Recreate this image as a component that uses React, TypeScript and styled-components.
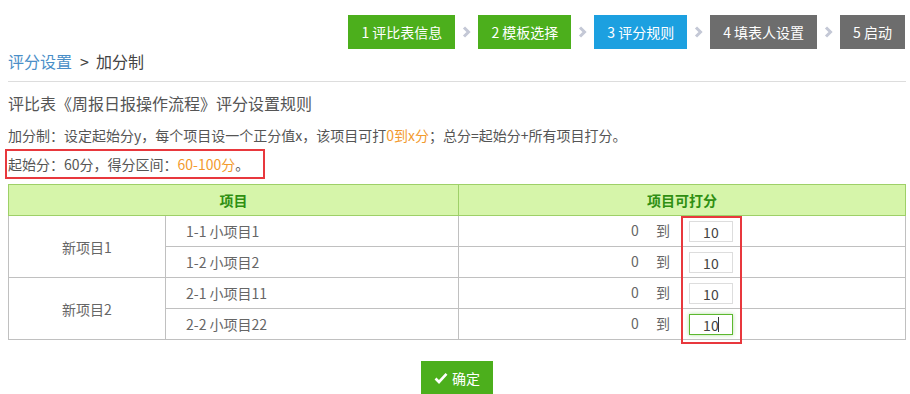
import React from "react";
import styled, { createGlobalStyle } from "styled-components";

const GlobalStyle = createGlobalStyle`
  body {
    margin: 0;
    background: #fff;
    font-family: "Microsoft YaHei", "Noto Sans CJK SC", "Noto Sans", sans-serif;
    color: #555;
    text-spacing-trim: space-all;
  }
`;

const Page = styled.div`
  padding: 15px 4px 0 8px;
`;

const Steps = styled.div`
  display: flex;
  justify-content: flex-end;
  align-items: center;
  padding-right: 1px;
`;

const stepColors: Record<string, string> = {
  done: "#4caf1c",
  active: "#1ca0e0",
  todo: "#6d6d6d",
};

const Step = styled.div<{ $status: string }>`
  height: 34px;
  padding: 0 13px;
  display: flex;
  align-items: center;
  background: ${(p) => stepColors[p.$status]};
  color: #fff;
  font-size: 14px;
  white-space: nowrap;
`;

const Chevron = styled.svg`
  width: 23px;
  height: 12px;
`;

const Breadcrumb = styled.div`
  font-size: 16px;
  line-height: 24px;
  color: #444;
`;

const CrumbLink = styled.a`
  color: #4a8fc8;
  text-decoration: none;
`;

const CrumbSep = styled.span`
  margin: 0 7px 0 8px;
`;

const Divider = styled.hr`
  margin: 8px 0 0;
  border: 0;
  border-top: 1px solid #ddd;
`;

const Title = styled.div`
  margin-top: 9px;
  font-size: 16px;
  line-height: 24px;
  color: #555;
`;

const Desc = styled.div`
  margin-top: 9px;
  font-size: 14px;
  line-height: 22px;
  color: #555;
`;

const Orange = styled.span`
  color: #f39a2e;
`;

const ScoreLine = styled.div`
  margin: 3px 0 0 -3px;
  width: 260px;
  box-sizing: border-box;
  border: 2px solid #e8383d;
  padding: 2px 1px;
  font-size: 14px;
  line-height: 22px;
  color: #555;
`;

const TableWrap = styled.div`
  position: relative;
  margin-top: 5px;
`;

const Table = styled.table`
  width: 898px;
  border-collapse: collapse;
  table-layout: fixed;
  font-size: 14px;
  color: #666;
`;

const Th = styled.th`
  height: 30px;
  padding: 0;
  background: #d6f5aa;
  border: 1px solid #9ed068;
  color: #2f8f12;
  font-weight: bold;
  font-size: 14px;
`;

const Td = styled.td<{ $align?: string; $pad?: number }>`
  height: 30px;
  padding: 0 0 0 ${(p) => p.$pad ?? 0}px;
  border: 1px solid #c0c0c0;
  text-align: ${(p) => p.$align ?? "left"};
  vertical-align: middle;
`;

const Zero = styled.span`
  margin-right: 17px;
`;

const To = styled.span`
  margin-right: 19px;
`;

const ScoreField = styled.span`
  position: relative;
  display: inline-block;
  vertical-align: middle;
`;

const ScoreInput = styled.input<{ $focus?: boolean }>`
  width: 44px;
  height: 21px;
  box-sizing: border-box;
  border: 1px solid ${(p) => (p.$focus ? "#5cb82e" : "#ddd")};
  box-shadow: ${(p) => (p.$focus ? "0 0 4px rgba(92,184,46,.45)" : "none")};
  outline: none;
  padding: 0;
  text-align: center;
  font: 14px "Microsoft YaHei", "Noto Sans CJK SC", "Noto Sans", sans-serif;
  color: #444;
  display: block;
`;

const Caret = styled.span`
  position: absolute;
  left: 29px;
  top: 3px;
  width: 1px;
  height: 15px;
  background: #333;
`;

const Highlight = styled.div`
  position: absolute;
  left: 673px;
  top: 32px;
  width: 61px;
  height: 128px;
  box-sizing: border-box;
  border: 2px solid #e8383d;
  pointer-events: none;
`;

const Footer = styled.div`
  display: flex;
  justify-content: center;
  padding-top: 21px;
`;

const Button = styled.button`
  width: 72px;
  height: 33px;
  border: 0;
  background: #4caf1c;
  color: #fff;
  font: 14px "Microsoft YaHei", "Noto Sans CJK SC", "Noto Sans", sans-serif;
  display: flex;
  align-items: center;
  justify-content: center;
  gap: 4px;
  padding: 0;
`;

const steps = [
  { label: "1 评比表信息", status: "done" },
  { label: "2 模板选择", status: "done" },
  { label: "3 评分规则", status: "active" },
  { label: "4 填表人设置", status: "todo" },
  { label: "5 启动", status: "todo" },
];

const groups = [
  { name: "新项目1", items: ["1-1 小项目1", "1-2 小项目2"] },
  { name: "新项目2", items: ["2-1 小项目11", "2-2 小项目22"] },
];

const Arrow = () => (
  <Chevron viewBox="0 0 23 12">
    <path d="M9 1.5 L13.5 6 L9 10.5" fill="none" stroke="#c4c8d6" strokeWidth="3" />
  </Chevron>
);

export default function App() {
  return (
    <Page>
      <GlobalStyle />
      <Steps>
        {steps.map((s, i) => (
          <React.Fragment key={s.label}>
            {i > 0 && <Arrow />}
            <Step $status={s.status}>{s.label}</Step>
          </React.Fragment>
        ))}
      </Steps>
      <Breadcrumb>
        <CrumbLink href="#">评分设置</CrumbLink>
        <CrumbSep>&gt;</CrumbSep>加分制
      </Breadcrumb>
      <Divider />
      <Title>评比表《周报日报操作流程》评分设置规则</Title>
      <Desc>
        加分制：设定起始分y，每个项目设一个正分值x，该项目可打<Orange>0到x分</Orange>；总分=起始分+所有项目打分。
      </Desc>
      <ScoreLine>
        起始分：60分，得分区间：<Orange>60-100分</Orange>。
      </ScoreLine>
      <TableWrap>
        <Table>
          <colgroup>
            <col style={{ width: 157 }} />
            <col style={{ width: 293 }} />
            <col />
          </colgroup>
          <thead>
            <tr>
              <Th colSpan={2}>项目</Th>
              <Th>项目可打分</Th>
            </tr>
          </thead>
          <tbody>
            {groups.map((g, gi) =>
              g.items.map((item, ii) => {
                const last = gi === groups.length - 1 && ii === g.items.length - 1;
                return (
                  <tr key={item}>
                    {ii === 0 && (
                      <Td rowSpan={g.items.length} $align="center">
                        {g.name}
                      </Td>
                    )}
                    <Td $pad={20}>{item}</Td>
                    <Td $align="center">
                      <Zero>0</Zero>
                      <To>到</To>
                      <ScoreField>
                        <ScoreInput readOnly defaultValue="10" $focus={last} />
                        {last && <Caret />}
                      </ScoreField>
                    </Td>
                  </tr>
                );
              })
            )}
          </tbody>
        </Table>
        <Highlight />
      </TableWrap>
      <Footer>
        <Button>
          <svg width="14" height="12" viewBox="0 0 14 12">
            <path d="M1.5 6.5 L5 10 L12.5 1.8" fill="none" stroke="#fff" strokeWidth="2.6" />
          </svg>
          确定
        </Button>
      </Footer>
    </Page>
  );
}
